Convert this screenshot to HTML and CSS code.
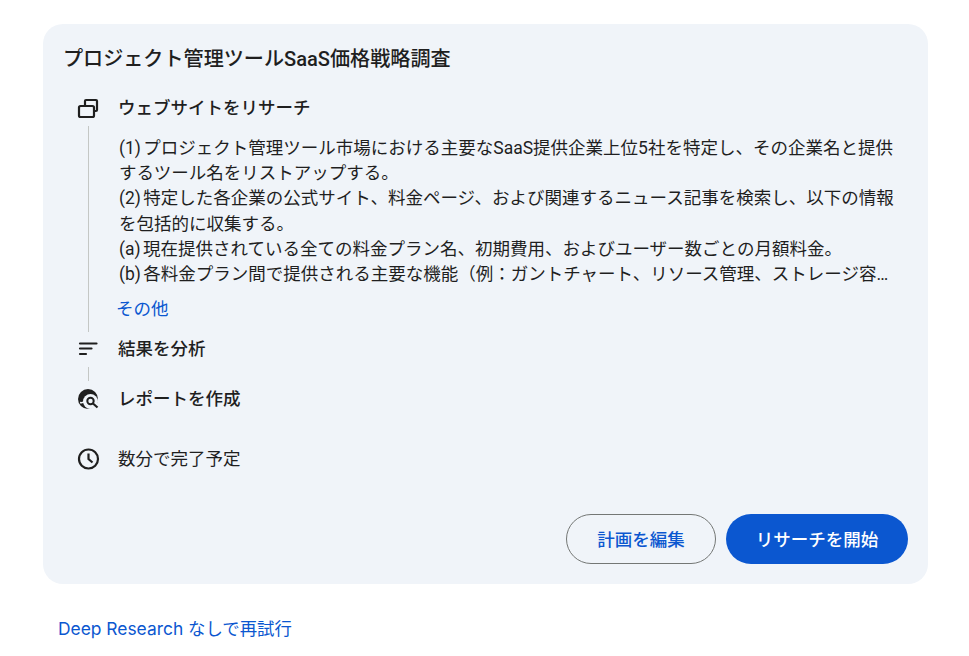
FILE: index.html
```html
<!DOCTYPE html>
<html lang="ja">
<head>
  <meta charset="UTF-8">
  <title>Deep Research</title>
  <link rel="stylesheet" href="styles.css">
</head>
<body>

  <div class="card">
    <h1 class="title">プロジェクト管理ツールSaaS価格戦略調査</h1>

    <div class="step step-first">
      <div class="rail">
        <svg class="icon" viewBox="0 0 24 24" fill="none" stroke="#1f1f1f" stroke-width="2.200">
          <rect x="3" y="10" width="15" height="11" rx="1.500"/>
          <path d="M9 9V5a1 1 0 0 1 1-1h10a1 1 0 0 1 1 1v9a1 1 0 0 1-1 1h-1"/>
        </svg>
        <div class="line"></div>
      </div>
      <div class="step-main">
        <div class="step-label">ウェブサイトをリサーチ</div>
        <div class="plan">(1) プロジェクト管理ツール市場における主要なSaaS提供企業上位5社を特定し、その企業名と提供するツール名をリストアップする。<br>(2) 特定した各企業の公式サイト、料金ページ、および関連するニュース記事を検索し、以下の情報を包括的に収集する。<br>(a) 現在提供されている全ての料金プラン名、初期費用、およびユーザー数ごとの月額料金。<br>(b) 各料金プラン間で提供される主要な機能（例：ガントチャート、リソース管理、ストレージ容量、サポート体制）の違い。</div>
        <a class="more" href="#">その他</a>
      </div>
    </div>

    <div class="step step-second">
      <div class="rail">
        <svg class="icon" viewBox="0 0 24 24" fill="none" stroke="#1f1f1f" stroke-width="2.200" stroke-linecap="round">
          <path d="M4 6.500h16.500M4 11.500h11.500M4 17h6"/>
        </svg>
        <div class="line"></div>
      </div>
      <div class="step-main">
        <div class="step-label">結果を分析</div>
      </div>
    </div>

    <div class="step step-third">
      <div class="rail">
        <svg class="icon" viewBox="0 0 24 24">
          <circle cx="12" cy="12" r="10" fill="#1f1f1f"/>
          <circle cx="14.500" cy="14.500" r="7.500" fill="#f0f4f9"/>
          <path d="M4 15.500c2 .5 4 0 5.500-2" fill="none" stroke="#f0f4f9" stroke-width="1.500"/>
          <circle cx="14.500" cy="14" r="3.200" fill="none" stroke="#1f1f1f" stroke-width="2"/>
          <path d="M17 16.500l4.500 4" stroke="#1f1f1f" stroke-width="2.200"/>
        </svg>
      </div>
      <div class="step-main">
        <div class="step-label">レポートを作成</div>
      </div>
    </div>

    <div class="step step-eta">
      <div class="rail">
        <svg class="icon" viewBox="0 0 24 24" fill="none" stroke="#1f1f1f" stroke-width="2.200">
          <circle cx="12.500" cy="12" r="9.500"/>
          <path d="M12.500 6.500V12l4 3.500"/>
        </svg>
      </div>
      <div class="step-main">
        <div class="eta">数分で完了予定</div>
      </div>
    </div>

    <div class="actions">
      <button class="btn btn-edit">計画を編集</button>
      <button class="btn btn-start">リサーチを開始</button>
    </div>
  </div>

  <a class="retry" href="#">Deep Research なしで再試行</a>

</body>
</html>
```

FILE: styles.css
```css
body {
  margin: 0;
  background: #fff;
  color: #1f1f1f;
  font-family: Roboto, 'Noto Sans CJK JP', sans-serif;
  font-size: 17.500px;
}
.card {
  width: 885px;
  height: 560px;
  box-sizing: border-box;
  margin: 24px 0 0 43px;
  padding: 20px;
  background: #f0f4f9;
  border-radius: 20px;
  display: flex;
  flex-direction: column;
}
.title {
  margin: 0;
  height: 28px;
  font-size: 20.100px;
  font-weight: 500;
  line-height: 30px;
}
.step {
  display: flex;
  gap: 18px;
  padding-left: 13px;
}
.step-first {
  margin-top: 24px;
}
.step-second {
  margin-top: 5px;
}
.step-third {
  margin-top: 6px;
}
.step-eta {
  margin-top: 36px;
}
.rail {
  width: 24px;
  flex-shrink: 0;
  display: flex;
  flex-direction: column;
  align-items: center;
}
.icon {
  width: 24px;
  height: 24px;
  display: block;
}
.line {
  width: 1px;
  flex: 1;
  margin-top: 6px;
  background: #c4c7c5;
}
.step-second .line {
  flex: none;
  height: 14px;
}
.step-main {
  flex: 1;
  min-width: 0;
}
.step-label {
  height: 24px;
  font-weight: 500;
  line-height: 24px;
}
.plan {
  margin: 16px 11px 0 1px;
  word-spacing: -2px;
  line-height: 25.200px;
  display: -webkit-box;
  -webkit-box-orient: vertical;
  -webkit-line-clamp: 6;
  overflow: hidden;
}
.more {
  display: block;
  margin: 10px 0 10.800px -2px;
  line-height: 24px;
  color: #0b57d0;
  text-decoration: none;
}
.eta {
  height: 24px;
  line-height: 24px;
}
.actions {
  margin-top: auto;
  display: flex;
  justify-content: flex-end;
  gap: 10px;
}
.btn {
  height: 50px;
  padding: 0 0 2px;
  border-radius: 25px;
  font-family: inherit;
  font-size: 17.500px;
  font-weight: 500;
  cursor: pointer;
}
.btn-edit {
  width: 150px;
  background: transparent;
  border: 1px solid #747775;
  color: #0b57d0;
}
.btn-start {
  width: 182px;
  background: #0b57d0;
  border: none;
  color: #fff;
}
.retry {
  display: block;
  height: 24px;
  margin: 32px 0 0 58px;
  font-family: Inter, 'Noto Sans CJK JP', sans-serif;
  font-size: 17.400px;
  line-height: 26px;
  color: #0b57d0;
  text-decoration: none;
}
```
